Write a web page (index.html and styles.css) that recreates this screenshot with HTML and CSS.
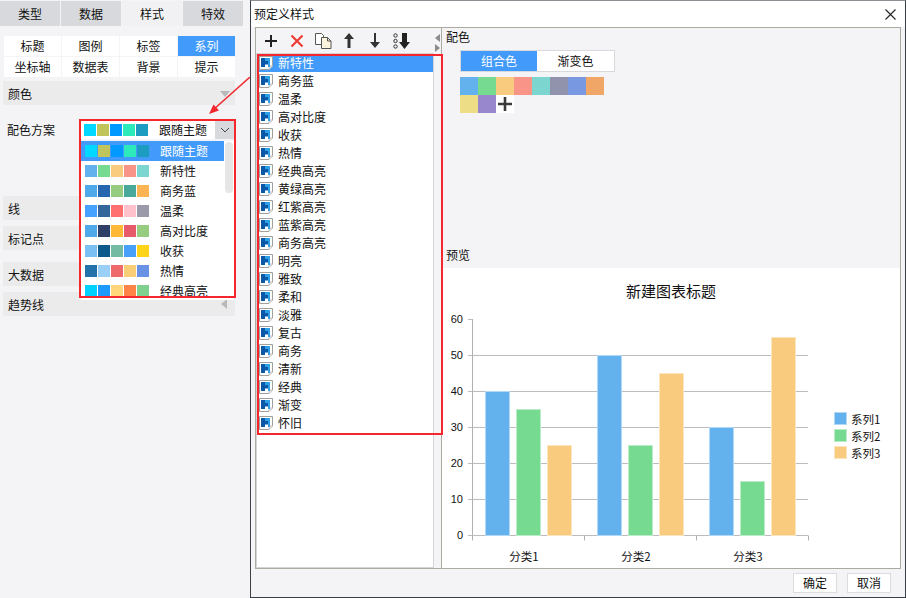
FILE: index.html
```html
<!DOCTYPE html>
<html lang="zh-CN">
<head>
<meta charset="utf-8">
<title>预定义样式</title>
<link rel="stylesheet" href="styles.css">
</head>
<body>
<svg class="defs" width="0" height="0" aria-hidden="true">
  <symbol id="style-icon" viewBox="0 0 14 14">
    <path d="M.5.5h13v9.5l-3.5 3.5h-9.500z" fill="#fff" stroke="#a0a0a0"/>
    <path d="M10 13.500v-3.500h3.500" fill="#e8e8e8" stroke="#c0c0c0"/>
    <path d="M2 2h4v3h3v3.500h-3v2.500h-4z" fill="#0b57a8"/>
    <path d="M6 2h5v9h-2v-6h-3z" fill="#2d9fe6"/>
  </symbol>
  <symbol id="tri-down" viewBox="0 0 10 6"><path d="M0 0h10l-5 6z" fill="#b9b9bb"/></symbol>
</svg>

<aside class="panel">
  <nav class="tabs">
    <span class="tab">类型</span><span class="tab">数据</span><span class="tab tab-on">样式</span><span class="tab">特效</span>
  </nav>
  <div class="subtabs">
    <span class="subtab">标题</span><span class="subtab">图例</span><span class="subtab">标签</span><span class="subtab subtab-on">系列</span>
    <span class="subtab">坐标轴</span><span class="subtab">数据表</span><span class="subtab">背景</span><span class="subtab">提示</span>
  </div>
  <div class="section">颜色<svg class="tri"><use href="#tri-down"/></svg></div>

  <div class="scheme">
    <span class="scheme-label">配色方案</span>
    <div class="combo">
      <div class="combo-value">
        <span class="chips">
          <i class="c-00d8ff"></i><i class="c-c1c45b"></i><i class="c-0099ff"></i><i class="c-2ceaba"></i><i class="c-1c9cc0"></i>
        </span>
        <span class="combo-text">跟随主题</span>
      </div>
      <span class="combo-btn">
        <svg width="10" height="6" viewBox="0 0 10 6"><path d="M1 1l4 4 4-4" fill="none" stroke="#444" stroke-width="1"/></svg>
      </span>
      <div class="popup">
        <div class="popup-row popup-row-on"><span class="chips"><i class="c-00d8ff"></i><i class="c-c1c45b"></i><i class="c-0099ff"></i><i class="c-2ceaba"></i><i class="c-1c9cc0"></i></span><span class="popup-text">跟随主题</span></div>
        <div class="popup-row"><span class="chips"><i class="c-63b2ee"></i><i class="c-76da91"></i><i class="c-f8cb7f"></i><i class="c-f89588"></i><i class="c-7cd6cf"></i></span><span class="popup-text">新特性</span></div>
        <div class="popup-row"><span class="chips"><i class="c-50a9e8"></i><i class="c-2666ae"></i><i class="c-95cc7f"></i><i class="c-48a89a"></i><i class="c-fbb454"></i></span><span class="popup-text">商务蓝</span></div>
        <div class="popup-row"><span class="chips"><i class="c-45a2ff"></i><i class="c-33669a"></i><i class="c-ff7070"></i><i class="c-ffc1cc"></i><i class="c-9b9aab"></i></span><span class="popup-text">温柔</span></div>
        <div class="popup-row"><span class="chips"><i class="c-50a9e8"></i><i class="c-2e4065"></i><i class="c-ffb936"></i><i class="c-e65a6a"></i><i class="c-95cc7f"></i></span><span class="popup-text">高对比度</span></div>
        <div class="popup-row"><span class="chips"><i class="c-7bc0f2"></i><i class="c-0c5a8c"></i><i class="c-73bba3"></i><i class="c-47a0fa"></i><i class="c-ffd318"></i></span><span class="popup-text">收获</span></div>
        <div class="popup-row"><span class="chips"><i class="c-2372aa"></i><i class="c-9ad0f8"></i><i class="c-ef6b6b"></i><i class="c-f9ce76"></i><i class="c-6892e4"></i></span><span class="popup-text">热情</span></div>
        <div class="popup-row"><span class="chips"><i class="c-00d2ff"></i><i class="c-1e9aff"></i><i class="c-ffd77a"></i><i class="c-ff8247"></i><i class="c-7fcf8e"></i></span><span class="popup-text">经典高亮</span></div>
        <span class="popup-thumb"></span>
      </div>
      <span class="mark mark-combo"></span>
    </div>
  </div>

  <div class="section section-line">线</div>
  <div class="section section-marker">标记点</div>
  <div class="section section-big">大数据</div>
  <div class="section section-trend">趋势线<svg class="tri tri-left"><use href="#tri-down"/></svg></div>

  <svg class="pointer" width="50" height="45" viewBox="0 0 50 45">
    <path d="M50 0L13 33" stroke="#f0272d" stroke-width="1.500" fill="none"/>
    <path d="M9 37l10-3.500-5.500-6z" fill="#f0272d"/>
  </svg>
</aside>

<section class="dialog">
  <header class="dialog-title">
    <span>预定义样式</span>
    <svg class="close" width="11" height="11" viewBox="0 0 11 11"><path d="M.5.5l10 10M10.500.5l-10 10" stroke="#222" stroke-width="1.100" fill="none"/></svg>
  </header>
  <div class="frame">
    <div class="left">
      <div class="toolbar">
        <span class="tool"><svg width="14" height="14" viewBox="0 0 14 14"><path d="M7 1v12M1 7h12" stroke="#222" stroke-width="2"/></svg></span>
        <span class="tool"><svg width="14" height="14" viewBox="0 0 14 14"><path d="M1.500 1.500l11 11M12.500 1.500l-11 11" stroke="#ee3b36" stroke-width="2.200"/></svg></span>
        <span class="tool"><svg width="17" height="16" viewBox="0 0 17 16"><path d="M.5.500h6l2 2v9h-8z" fill="#fff" stroke="#555"/><path d="M6.500 4.500h6l3.500 3.500v7.500h-9.500z" fill="#fdf4dd" stroke="#555"/><path d="M12.500 4.500v3.500h3.500" fill="none" stroke="#555"/></svg></span>
        <span class="tool"><svg width="12" height="15" viewBox="0 0 12 15"><path d="M6 0l5 6H7.500v9h-3V6H1z" fill="#333"/></svg></span>
        <span class="tool"><svg width="12" height="15" viewBox="0 0 12 15"><path d="M6 15l5-6H7V0H5v9H1z" fill="#333"/></svg></span>
        <span class="tool"><svg width="17" height="16" viewBox="0 0 17 16"><circle cx="2.500" cy="2.500" r="1.700" fill="none" stroke="#333"/><circle cx="2.500" cy="8" r="1.700" fill="none" stroke="#333"/><circle cx="2.500" cy="13.500" r="1.700" fill="none" stroke="#333"/><path d="M11.500 16l5.500-7h-3V0H9v9H6z" fill="#222"/></svg></span>
      </div>
      <div class="list-wrap">
        <ul class="list">
          <li class="item item-on"><svg class="item-icon"><use href="#style-icon"/></svg>新特性</li>
          <li class="item"><svg class="item-icon"><use href="#style-icon"/></svg>商务蓝</li>
          <li class="item"><svg class="item-icon"><use href="#style-icon"/></svg>温柔</li>
          <li class="item"><svg class="item-icon"><use href="#style-icon"/></svg>高对比度</li>
          <li class="item"><svg class="item-icon"><use href="#style-icon"/></svg>收获</li>
          <li class="item"><svg class="item-icon"><use href="#style-icon"/></svg>热情</li>
          <li class="item"><svg class="item-icon"><use href="#style-icon"/></svg>经典高亮</li>
          <li class="item"><svg class="item-icon"><use href="#style-icon"/></svg>黄绿高亮</li>
          <li class="item"><svg class="item-icon"><use href="#style-icon"/></svg>红紫高亮</li>
          <li class="item"><svg class="item-icon"><use href="#style-icon"/></svg>蓝紫高亮</li>
          <li class="item"><svg class="item-icon"><use href="#style-icon"/></svg>商务高亮</li>
          <li class="item"><svg class="item-icon"><use href="#style-icon"/></svg>明亮</li>
          <li class="item"><svg class="item-icon"><use href="#style-icon"/></svg>雅致</li>
          <li class="item"><svg class="item-icon"><use href="#style-icon"/></svg>柔和</li>
          <li class="item"><svg class="item-icon"><use href="#style-icon"/></svg>淡雅</li>
          <li class="item"><svg class="item-icon"><use href="#style-icon"/></svg>复古</li>
          <li class="item"><svg class="item-icon"><use href="#style-icon"/></svg>商务</li>
          <li class="item"><svg class="item-icon"><use href="#style-icon"/></svg>清新</li>
          <li class="item"><svg class="item-icon"><use href="#style-icon"/></svg>经典</li>
          <li class="item"><svg class="item-icon"><use href="#style-icon"/></svg>渐变</li>
          <li class="item"><svg class="item-icon"><use href="#style-icon"/></svg>怀旧</li>
        </ul>
        <div class="splitter">
          <svg width="5" height="20" viewBox="0 0 5 20"><path d="M5 1v8L0 5zM0 11v8l5-4z" fill="#8b8b8b"/></svg>
        </div>
      </div>
      <span class="mark mark-list"></span>
    </div>
    <div class="right">
      <div class="palette">
        <div class="pane-label">配色</div>
        <div class="toggle"><span class="toggle-item toggle-on">组合色</span><span class="toggle-item">渐变色</span></div>
        <div class="swatches">
          <i class="c-63b2ee"></i><i class="c-76da91"></i><i class="c-f8cb7f"></i><i class="c-f89588"></i><i class="c-7cd6cf"></i><i class="c-9192ab"></i><i class="c-7898e1"></i><i class="c-efa666"></i><i class="c-eddd86"></i><i class="c-9987ce"></i>
          <span class="add"><svg width="14" height="14" viewBox="0 0 14 14"><path d="M7 0v14M0 7h14" stroke="#3a3a3a" stroke-width="2.600"/></svg></span>
        </div>
        <div class="pane-label pane-label-bottom">预览</div>
      </div>
      <svg class="chart" width="458" height="300" viewBox="442 268 458 300">
        <text class="chart-title" x="671" y="297" text-anchor="middle">新建图表标题</text>
        <g class="grid">
          <path d="M468 319.500h5M468 355.500h340M468 391.500h340M468 427.500h340M468 463.500h340M468 499.500h340M468 535.500h340"/>
        </g>
        <g class="axis">
          <path d="M472.500 319v216.500M472.500 535.500v5M584.500 535.500v5M696.500 535.500v5M808.500 535.500v5"/>
        </g>
        <g class="ticks" text-anchor="end">
          <text x="463" y="323">60</text><text x="463" y="359">50</text><text x="463" y="395">40</text><text x="463" y="431">30</text><text x="463" y="467">20</text><text x="463" y="503">10</text><text x="463" y="539">0</text>
        </g>
        <g class="bar-1">
          <rect x="485.500" y="391.500" width="24" height="144"/><rect x="597.500" y="355.500" width="24" height="180"/><rect x="709.500" y="427.500" width="24" height="108"/>
        </g>
        <g class="bar-2">
          <rect x="516.500" y="409.500" width="24" height="126"/><rect x="628.500" y="445.500" width="24" height="90"/><rect x="740.500" y="481.500" width="24" height="54"/>
        </g>
        <g class="bar-3">
          <rect x="547.500" y="445.500" width="24" height="90"/><rect x="659.500" y="373.500" width="24" height="162"/><rect x="771.500" y="337.500" width="24" height="198"/>
        </g>
        <g class="cats" text-anchor="middle">
          <text x="524" y="561">分类1</text><text x="636" y="561">分类2</text><text x="748" y="561">分类3</text>
        </g>
        <g class="legend">
          <rect class="bar-1-key" x="834.500" y="412.500" width="12" height="12"/><text x="851" y="424">系列1</text>
          <rect class="bar-2-key" x="834.500" y="429.500" width="12" height="12"/><text x="851" y="441">系列2</text>
          <rect class="bar-3-key" x="834.500" y="446.500" width="12" height="12"/><text x="851" y="458">系列3</text>
        </g>
      </svg>
    </div>
  </div>
  <footer class="dialog-foot">
    <button class="btn">确定</button><button class="btn">取消</button>
  </footer>
</section>
</body>
</html>
```
FILE: styles.css
```css
* { box-sizing: border-box; }
html, body { margin: 0; height: 100%; }
body {
  width: 906px; height: 598px; overflow: hidden;
  display: flex;
  background: #f4f4f6;
  color: #111;
  font: 12px/18px "Noto Sans CJK SC", "Liberation Sans", sans-serif;
}
.defs { position: absolute; }
i { display: block; }

/* left property panel */
.panel { position: relative; width: 250px; flex: none; padding-top: 1px; }
.tabs { display: grid; grid-template-columns: repeat(4, 60px); gap: 1px; }
.tab { height: 25px; line-height: 25px; text-align: center; background: #d8d9dc; }
.tab-on { background: #f1f1f3; }
.subtabs {
  display: grid; grid-template-columns: repeat(4, 57px); grid-auto-rows: 20px; gap: 1px;
  margin: 10px 0 0 4px;
}
.subtab { background: #fff; text-align: center; line-height: 20px; }
.subtab-on { background: #429bfa; color: #fff; }
.section {
  position: relative; width: 232px; height: 24px; margin: 4px 0 0 3px; padding-left: 5px;
  line-height: 25px; background: #ebebeb;
}
.tri { position: absolute; right: 5px; top: 10px; width: 10px; height: 6px; }
.tri-left { transform: rotate(90deg); right: 6px; top: 9px; }
.section-line { margin-top: 57px; }
.section-marker { margin-top: 6px; }
.section-big { margin-top: 12px; }
.section-trend { margin-top: 6px; }

.scheme { display: flex; margin-top: 14px; height: 20px; align-items: flex-start; padding-left: 7px; }
.scheme-label { width: 74px; line-height: 22px; }
.combo { position: relative; width: 153px; height: 18px; margin-top: 2px; display: flex; background: #fff; }
.combo-value { flex: 1; display: flex; align-items: center; padding-left: 3px; }
.combo-text { margin-left: 10px; }
.combo-btn { width: 19px; background: #d8d9dc; display: flex; align-items: center; justify-content: center; }
.chips { display: flex; gap: 0; }
.chips i { width: 12px; height: 12px; margin-right: 1px; }
.popup {
  position: absolute; left: 0; top: 20px; width: 153px; height: 159px; overflow: hidden;
  background: #fff; z-index: 2;
}
.popup-row { display: flex; align-items: center; height: 20px; width: 143px; padding-left: 4px; }
.popup-row-on { background: #429bfa; color: #fff; }
.popup-text { margin-left: 10px; }
.popup-thumb {
  position: absolute; left: 144px; top: 1px; width: 8px; height: 51px;
  border-radius: 4px; background: #e6e6e6;
}
.mark { position: absolute; border: 2px solid #f5262c; z-index: 3; pointer-events: none; }
.mark-combo { left: -2px; top: -2px; width: 157px; height: 179px; }
.pointer { position: absolute; left: 200px; top: 77px; z-index: 4; }

/* dialog */
.dialog {
  flex: 1; display: flex; flex-direction: column; height: 598px;
  border: 1px solid #3b4046; border-top-color: #8d9095;
  background: #f4f4f6;
}
.dialog-title {
  height: 26px; flex: none; background: #fff; display: flex; align-items: center;
  justify-content: space-between; padding: 0 9px 0 3px;
}
.frame {
  display: flex; height: 542px; flex: none; margin: 0 4px;
  border: 1px solid #aaaaa0;
}
.left { position: relative; width: 185px; flex: none; display: flex; flex-direction: column; }
.toolbar { height: 25px; display: flex; padding-left: 2px; }
.tool { width: 26px; display: flex; align-items: center; justify-content: center; }
.list-wrap { flex: 1; display: flex; min-height: 0; }
.list {
  list-style: none; margin: 0; padding: 0; width: 178px;
  background: #fff; border: 1px solid #d4d4d4;
}
.item { display: flex; align-items: center; height: 18px; padding-left: 2px; font-size: 12px; }
.item-on { background: #429bfa; color: #fff; }
.item-icon { width: 14px; height: 14px; margin-right: 5px; flex: none; }
.splitter { width: 7px; margin-top: -24px; padding-top: 4px; padding-left: 1px; height: 30px; }
.mark-list { left: 1px; top: 26px; width: 186px; height: 381px; }

.right { flex: 1; display: flex; flex-direction: column; border-left: 1px solid #aaaaa0; min-width: 0; }
.palette { height: 240px; flex: none; display: flex; flex-direction: column; padding-left: 4px; }
.pane-label { line-height: 18px; }
.pane-label-bottom { margin-top: auto; padding-bottom: 4px; line-height: 18px; }
.toggle {
  display: flex; width: 155px; height: 22px; margin: 4px 0 0 14px; background: #fff;
  border: 1px solid #d8d9dc;
}
.toggle-item { flex: 1; text-align: center; line-height: 20px; }
.toggle-on { background: #429bfa; color: #fff; flex: 0 0 76px; }
.swatches { display: grid; grid-template-columns: repeat(8, 18px); grid-auto-rows: 18px; margin: 5px 0 0 14px; }
.add { background: #fff; display: flex; align-items: center; justify-content: center; }
.chart { display: block; background: #fff; flex: none; }
.chart text { font-family: "Noto Sans CJK SC", "Liberation Sans", sans-serif; font-size: 11.500px; fill: #111; }
.chart .chart-title { font-size: 15px; }
.chart .ticks text { font-family: "Liberation Sans", sans-serif; font-size: 11px; }
.grid path { stroke: #bcbcbc; fill: none; }
.axis path { stroke: #b0b0b0; fill: none; }
.bar-1 rect, .bar-1-key { fill: #63b2ee; stroke: #b1d8f6; }
.bar-2 rect, .bar-2-key { fill: #76da91; stroke: #baecc8; }
.bar-3 rect, .bar-3-key { fill: #f8cb7f; stroke: #fbe5bf; }

.dialog-foot { flex: 1; display: flex; justify-content: flex-end; gap: 10px; padding: 4px 14px 0 0; }
.btn {
  width: 44px; height: 20px; padding: 0; background: #fff; border: 1px solid #dcdcdc;
  font: inherit; color: #111; line-height: 18px;
}

/* palette colours */
.c-00d8ff { background: #00d8ff; } .c-c1c45b { background: #c1c45b; } .c-0099ff { background: #0099ff; }
.c-2ceaba { background: #2ceaba; } .c-1c9cc0 { background: #1c9cc0; }
.c-63b2ee { background: #63b2ee; } .c-76da91 { background: #76da91; } .c-f8cb7f { background: #f8cb7f; }
.c-f89588 { background: #f89588; } .c-7cd6cf { background: #7cd6cf; } .c-9192ab { background: #9192ab; }
.c-7898e1 { background: #7898e1; } .c-efa666 { background: #efa666; } .c-eddd86 { background: #eddd86; }
.c-9987ce { background: #9987ce; }
.c-50a9e8 { background: #50a9e8; } .c-2666ae { background: #2666ae; } .c-95cc7f { background: #95cc7f; }
.c-48a89a { background: #48a89a; } .c-fbb454 { background: #fbb454; }
.c-45a2ff { background: #45a2ff; } .c-33669a { background: #33669a; } .c-ff7070 { background: #ff7070; }
.c-ffc1cc { background: #ffc1cc; } .c-9b9aab { background: #9b9aab; }
.c-2e4065 { background: #2e4065; } .c-ffb936 { background: #ffb936; } .c-e65a6a { background: #e65a6a; }
.c-7bc0f2 { background: #7bc0f2; } .c-0c5a8c { background: #0c5a8c; } .c-73bba3 { background: #73bba3; }
.c-47a0fa { background: #47a0fa; } .c-ffd318 { background: #ffd318; }
.c-2372aa { background: #2372aa; } .c-9ad0f8 { background: #9ad0f8; } .c-ef6b6b { background: #ef6b6b; }
.c-f9ce76 { background: #f9ce76; } .c-6892e4 { background: #6892e4; }
.c-00d2ff { background: #00d2ff; } .c-1e9aff { background: #1e9aff; } .c-ffd77a { background: #ffd77a; }
.c-ff8247 { background: #ff8247; } .c-7fcf8e { background: #7fcf8e; }
```
